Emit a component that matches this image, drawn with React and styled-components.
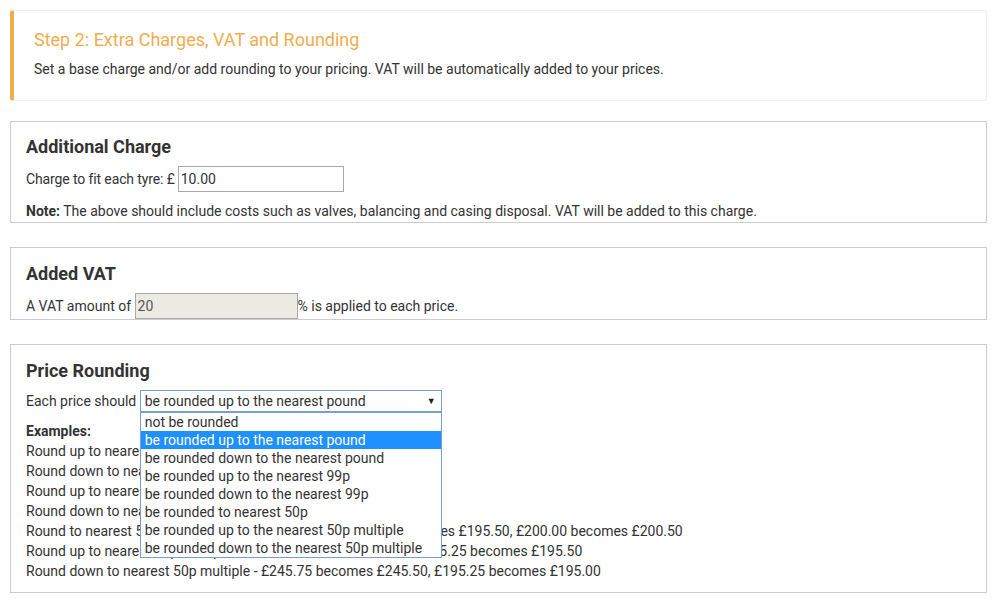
import styled, { createGlobalStyle } from "styled-components";

const GlobalStyle = createGlobalStyle`
	body {
		margin: 0;
		background: #fff;
		font-family: Roboto, "Liberation Sans", sans-serif;
		font-size: 14px;
		color: #333;
	}
	* {
		box-sizing: border-box;
	}
`;

const roundingOptions = [
    'not be rounded',
    'be rounded up to the nearest pound',
    'be rounded down to the nearest pound',
    'be rounded up to the nearest 99p',
    'be rounded down to the nearest 99p',
    'be rounded to nearest 50p',
    'be rounded up to the nearest 50p multiple',
    'be rounded down to the nearest 50p multiple',
];

const examples = [
    'Round up to nearest pound - £195.25 becomes £196.00',
    'Round down to nearest pound - £195.75 becomes £195.00',
    'Round up to nearest 99p - £195.25 becomes £195.99',
    'Round down to nearest 99p - £195.25 becomes £194.99',
    'Round to nearest 50p - £195.75 becomes £196.00, £195.25 becomes £195.50, £200.00 becomes £200.50',
    'Round up to nearest 50p multiple - £195.75 becomes £196.00, £195.25 becomes £195.50',
    'Round down to nearest 50p multiple - £245.75 becomes £245.50, £195.25 becomes £195.00',
];

export default function App() {
    const selected = 1;

    return (
        <>
            <GlobalStyle />
            <Page>
                <Callout>
                    <CalloutTitle>Step 2: Extra Charges, VAT and Rounding</CalloutTitle>
                    <CalloutText>
                        Set a base charge and/or add rounding to your pricing. VAT will be automatically added to your prices.
                    </CalloutText>
                </Callout>

                <Panel $gap={20}>
                    <Heading>Additional Charge</Heading>
                    <Row>
                        <Label $tight>Charge to fit each tyre: £</Label>
                        <Input $width={166} $offset={3} defaultValue="10.00" />
                    </Row>
                    <Note>
                        <b>Note:</b> The above should include costs such as valves, balancing and casing disposal. VAT will be added to this charge.
                    </Note>
                </Panel>

                <Panel $gap={24} $top={15} $bottom={0}>
                    <Heading>Added VAT</Heading>
                    <Row>
                        A VAT amount of&nbsp;
                        <Input $width={163} defaultValue="20" disabled />
                        % is applied to each price.
                    </Row>
                </Panel>

                <Panel $gap={24} $top={15} $bottom={11}>
                    <Heading>Price Rounding</Heading>
                    <Row>
                        Each price should&nbsp;
                        <SelectWrap>
                            <Select>
                                {roundingOptions[selected]}
                                <Arrow>▼</Arrow>
                            </Select>
                            <Options>
                                {roundingOptions.map((opt, i) => (
                                    <Option key={opt} $active={i === selected}>{opt}</Option>
                                ))}
                            </Options>
                        </SelectWrap>
                    </Row>
                    <Examples>
                        <b>Examples:</b>
                        {examples.map((ex) => (
                            <div key={ex}>{ex}</div>
                        ))}
                    </Examples>
                </Panel>
            </Page>
        </>
    );
}

const Page = styled.div`
	padding: 10px 11px 10px 10px;
`;

const Callout = styled.div`
	border: 1px solid #eee;
	border-left: 4px solid #f0ad4e;
	border-radius: 3px;
	padding: 18px 20px 21px 20px;
`;

const CalloutTitle = styled.h4`
	margin: 0 0 8px;
	font-size: 18px;
	font-weight: 400;
	line-height: 22px;
	color: #f0ad4e;
`;

const CalloutText = styled.p`
	margin: 0;
	line-height: 20px;
`;

const Panel = styled.div`
	margin-top: ${({ $gap }) => $gap}px;
	border: 1px solid #ccc;
	padding: ${({ $top = 14 }) => $top}px 15px ${({ $bottom = 1 }) => $bottom}px;
`;

const Heading = styled.h3`
	margin: 0 0 8px;
	font-size: 18px;
	font-weight: 700;
	line-height: 22px;
`;

const Row = styled.div`
	display: flex;
	align-items: center;
	line-height: 20px;
	white-space: pre;
`;

const Label = styled.span`
	letter-spacing: ${({ $tight }) => ($tight ? '-0.12px' : 'normal')};
`;

const Input = styled.input`
	width: ${({ $width }) => $width}px;
	height: 26px;
	padding: 0 2px;
	margin: 0 0 0 ${({ $offset = 0 }) => $offset}px;
	border: 1px solid #a9a9a9;
	font-family: inherit;
	font-size: 14px;
	color: #333;
	background: #fff;
	&:disabled {
		background: #ebebe4;
		color: #555;
	}
`;

const Note = styled.p`
	margin: 9px 0 0;
	line-height: 20px;
`;

const SelectWrap = styled.div`
	position: relative;
	width: 302px;
`;

const Select = styled.div`
	display: flex;
	align-items: center;
	justify-content: space-between;
	height: 22px;
	padding: 0 5px 0 4px;
	border: 1px solid #7a9cd3;
	background: #fff;
	line-height: 20px;
`;

const Arrow = styled.span`
	font-size: 9px;
	color: #222;
`;

const Options = styled.ul`
	position: absolute;
	top: 100%;
	left: 0;
	width: 100%;
	margin: 0;
	padding: 0;
	list-style: none;
	border: 1px solid #7a9cd3;
	background: #fff;
	z-index: 10;
`;

const Option = styled.li`
	height: 18px;
	padding: 0 4px;
	line-height: 18px;
	background: ${({ $active }) => ($active ? '#1e90ff' : '#fff')};
	color: ${({ $active }) => ($active ? '#fff' : '#333')};
`;

const Examples = styled.div`
	margin-top: 9px;
	line-height: 20px;
`;
